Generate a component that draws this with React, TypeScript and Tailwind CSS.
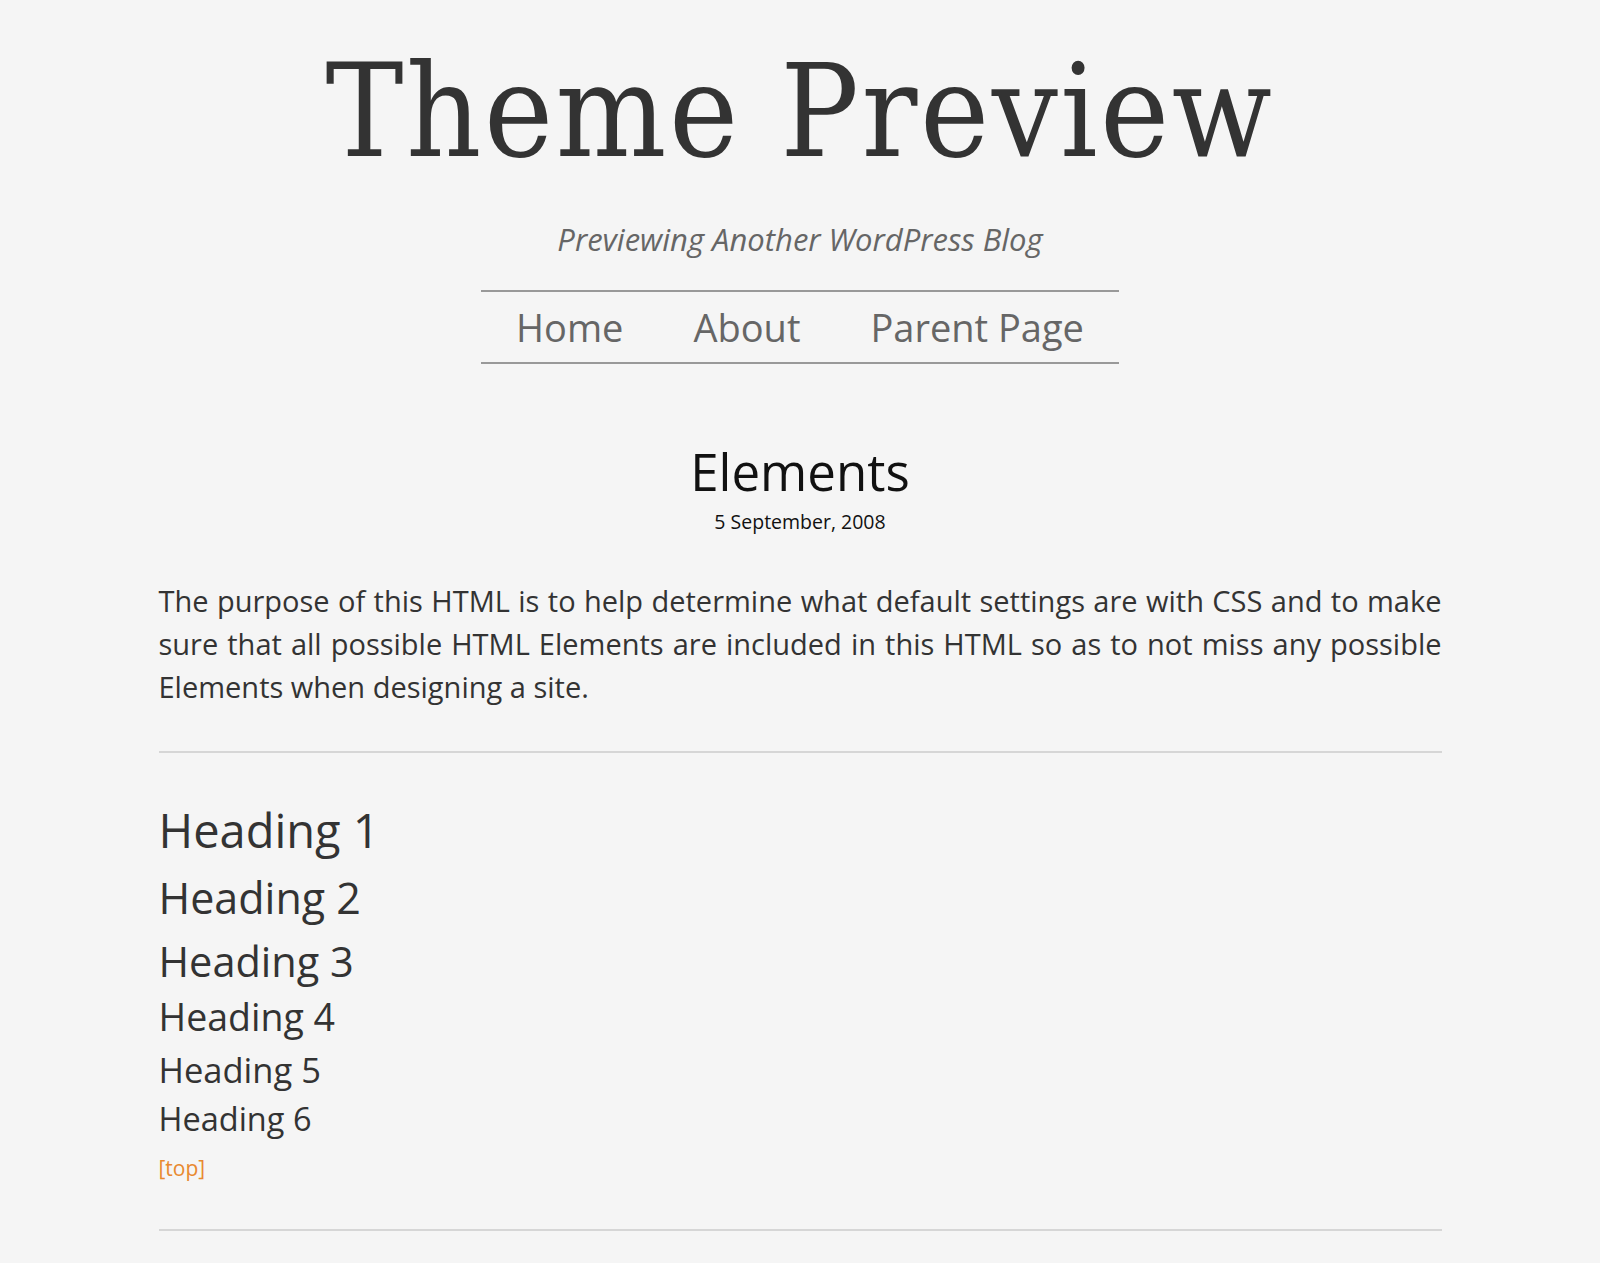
export default function App() {
  const body = { fontFamily: '"Open Sans", "Noto Sans", sans-serif' };
  return (
    <div className="min-h-[1263px] bg-[#f5f5f5]" style={body}>
      <header className="flex flex-col items-center pt-[36px]">
        <h1
          className="text-[130px] leading-[150px] tracking-[2.5px] text-[#333] font-normal"
          style={{ fontFamily: '"DejaVu Serif Condensed", "DejaVu Serif", serif' }}
        >
          Theme Preview
        </h1>
        <p className="mt-[33px] text-[31px] leading-[40px] italic text-[#666]">
          Previewing Another WordPress Blog
        </p>
        <nav className="mt-[31px] border-y-2 border-[#999]">
          <ul className="flex">
            <li className="px-[35px] text-[38px] leading-[70px] text-[#666]">Home</li>
            <li className="px-[35px] text-[38px] leading-[70px] text-[#666]">About</li>
            <li className="px-[35px] text-[38px] leading-[70px] text-[#666]">Parent Page</li>
          </ul>
        </nav>
      </header>
      <main className="mx-auto w-[1283px] pt-[77px]">
        <div className="flex flex-col items-center">
          <h2 className="text-[51px] leading-[60px] text-[#111]">Elements</h2>
          <p className="mt-[7px] text-[19.5px] leading-[28px] text-[#111]">5 September, 2008</p>
        </div>
        <p className="mt-[43px] text-[29px] leading-[43px] text-[#333] text-justify">
          The purpose of this HTML is to help determine what default settings are with CSS and to make sure that all
          possible HTML Elements are included in this HTML so as to not miss any possible Elements when designing a site.
        </p>
        <hr className="mt-[43px] border-0 border-t-2 border-[#d6d6d6]" />
        <div className="mt-[47px] flex flex-col items-start text-[#333]">
          <h1 className="text-[47px] leading-[60px]">Heading 1</h1>
          <h2 className="mt-[10px] text-[43px] leading-[56px]">Heading 2</h2>
          <h3 className="mt-[8px] text-[41.5px] leading-[54px]">Heading 3</h3>
          <h4 className="mt-[5px] text-[37.5px] leading-[48px]">Heading 4</h4>
          <h5 className="mt-[7px] text-[34.5px] leading-[44px]">Heading 5</h5>
          <h6 className="mt-[6px] text-[32.5px] leading-[42px]">Heading 6</h6>
          <a className="mt-[13px] text-[21px] leading-[30px] text-[#e8892f]" href="#">[top]</a>
        </div>
        <hr className="mt-[46px] border-0 border-t-2 border-[#d6d6d6]" />
      </main>
    </div>
  );
}
